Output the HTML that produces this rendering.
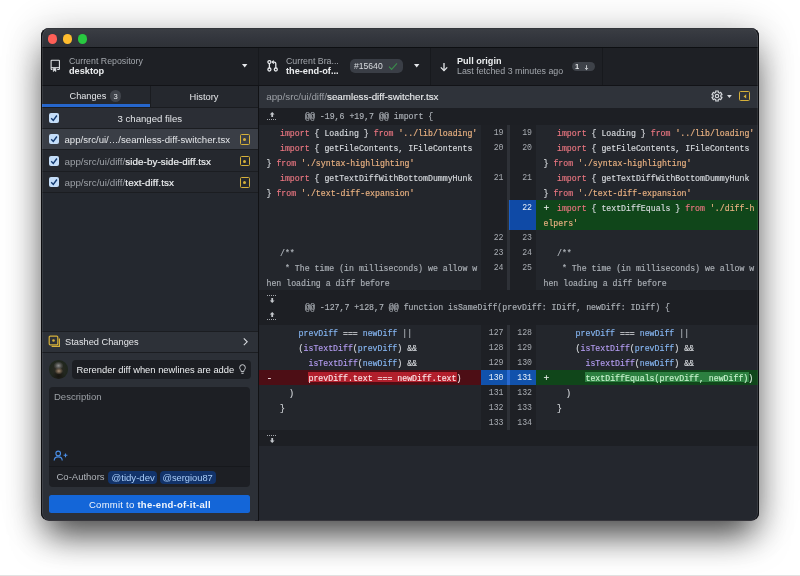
<!DOCTYPE html>
<html><head><meta charset="utf-8">
<style>
*{box-sizing:border-box;margin:0;padding:0}
html,body{width:800px;height:576px;overflow:hidden;background:#fff;font-family:"Liberation Sans",sans-serif}
.a{position:absolute}
#strip{left:0;top:574.8px;width:800px;height:1.2px;background:#e2e2e2}
#shadow{left:41px;top:28px;width:718px;height:492.5px;border-radius:8px;box-shadow:0 20px 34px -6px rgba(0,0,0,.66),0 4px 40px rgba(0,0,0,.24)}
#ring{left:41px;top:28px;width:718px;height:492.5px;border-radius:8px;border:1px solid #0c0d10;border-top-color:rgba(12,13,16,.25);border-bottom-color:rgba(30,28,34,.6);box-shadow:inset 1px 0 0 0 rgba(255,255,255,.09),inset -1px 0 0 0 rgba(255,255,255,.09);pointer-events:none}
#win{left:0;top:0;width:800px;height:576px;clip-path:inset(28px 41px 55.5px 41px round 8px);background:#24272d}
.m{font-family:"Liberation Mono",monospace;font-size:8.22px;white-space:pre;line-height:15px;color:#d8dbdf;-webkit-text-stroke:0.15px}
.t{white-space:nowrap;line-height:1}
.dot{width:9.5px;height:9.5px;border-radius:50%;top:34px}
.k{color:#ea7680}.s{color:#eab282}.v{color:#86b6f2}.f{color:#b39cf0}.c{color:#adb2b8}
.ln{font-family:"Liberation Mono",monospace;font-size:8.22px;line-height:15px;color:#a9adb3;text-align:right}
</style></head><body>
<div id="strip" class="a"></div>
<div id="shadow" class="a"></div>
<div id="win" class="a"><div class="a" style="left:0;top:0;width:800px;height:576px;will-change:transform">
  <!-- title bar -->
  <div class="a" style="left:41px;top:28px;width:718px;height:19.5px;background:linear-gradient(#44474c 0,#3a3d43 1.5px,#34373e 45%,#2e3137 100%);border-bottom:1px solid #0d0f12"></div>
  <div class="a dot" style="left:47.5px;background:#fe5f57"></div>
  <div class="a dot" style="left:62.5px;background:#febc2e"></div>
  <div class="a dot" style="left:77.5px;background:#28c840"></div>

  <!-- toolbar -->
  <div class="a" style="left:41px;top:47.5px;width:718px;height:38px;background:#1e2025;border-bottom:1px solid #121317"></div>
  <div class="a" style="left:258px;top:47.5px;width:1px;height:37px;background:#17191d"></div>
  <div class="a" style="left:430px;top:47.5px;width:1px;height:37px;background:#17191d"></div>
  <div class="a" style="left:602px;top:47.5px;width:1px;height:37px;background:#17191d"></div>
  <!-- repo icon -->
  <svg class="a" style="left:48px;top:57px" width="16" height="17" viewBox="0 0 16 17" fill="none" stroke="#e6e8eb" stroke-width="1.05">
    <path d="M3.1 12.5 V3.8 Q3.1 3.2 3.7 3.2 H10.8 Q11.4 3.2 11.4 3.8 V11.9 Q11.4 12.5 10.8 12.5 H9.2"/>
    <path d="M3.1 10.7 H11.4"/>
    <path d="M3.1 12.5 H4.4"/>
    <path d="M5.3 11.6 V14.6 L6.6 13.6 L7.9 14.6 V11.6 Z" fill="#e6e8eb" stroke-width="0.6"/>
  </svg>
  <div class="a t" style="left:69px;top:57px;font-size:8.8px;color:#a3a7ad">Current Repository</div>
  <div class="a t" style="left:69px;top:67px;font-size:9.2px;font-weight:bold;color:#eceef0">desktop</div>
  <svg class="a" style="left:242px;top:64px" width="6" height="4"><path d="M0 0H5.4L2.7 3.4Z" fill="#e6e8eb"/></svg>

  <!-- branch icon -->
  <svg class="a" style="left:264px;top:57px" width="16" height="17" viewBox="0 0 16 17" fill="none" stroke="#e6e8eb" stroke-width="1.3">
    <circle cx="5.4" cy="5.1" r="1.5"/>
    <circle cx="5.4" cy="12.5" r="1.5"/>
    <path d="M5.4 6.6 V11"/>
    <circle cx="11.8" cy="12.5" r="1.5"/>
    <path d="M11.8 11 V6.6 Q11.8 5.1 10.3 5.1 H8.6"/>
    <path d="M9.8 3.6 L8.3 5.1 L9.8 6.6"/>
  </svg>
  <div class="a t" style="left:286px;top:57px;font-size:8.8px;color:#a3a7ad">Current Bra...</div>
  <div class="a t" style="left:286px;top:67px;font-size:9.2px;font-weight:bold;color:#eceef0">the-end-of...</div>
  <div class="a" style="left:350px;top:59px;width:52.5px;height:13.5px;border-radius:5px;background:#3a3e46"></div>
  <div class="a t" style="left:354px;top:62px;font-size:8.6px;color:#d7dade">#15640</div>
  <svg class="a" style="left:388px;top:62px" width="10" height="9"><path d="M1 4.6 L3.6 7.4 L9 1.4" fill="none" stroke="#3a8c4b" stroke-width="1.1"/></svg>
  <svg class="a" style="left:414px;top:64px" width="6" height="4"><path d="M0 0H5.4L2.7 3.4Z" fill="#e6e8eb"/></svg>

  <!-- pull icon -->
  <svg class="a" style="left:438px;top:62px" width="12" height="10" viewBox="0 0 12 10" fill="none" stroke="#e6e8eb" stroke-width="1.3">
    <path d="M6 1 V8.6"/><path d="M2.8 5.4 L6 8.6 L9.2 5.4"/>
  </svg>
  <div class="a t" style="left:457px;top:57px;font-size:9.1px;font-weight:bold;color:#eceef0">Pull origin</div>
  <div class="a t" style="left:457px;top:67px;font-size:8.85px;color:#a3a7ad">Last fetched 3 minutes ago</div>
  <div class="a" style="left:571.5px;top:62px;width:23px;height:9px;border-radius:4.5px;background:#3e4249"></div>
  <div class="a t" style="left:575px;top:63px;font-size:7.5px;font-weight:bold;color:#e4e6e9">1</div>
  <svg class="a" style="left:582.5px;top:63.5px" width="7" height="7" viewBox="0 0 7 7" fill="none" stroke="#cfd2d6" stroke-width="0.9"><path d="M3.5 1.2V5.6"/><path d="M1.9 4L3.5 5.6L5.1 4"/></svg>

  <!-- LEFT PANE -->
  <div class="a" style="left:41px;top:85.5px;width:217px;height:435px;background:#24282f"></div>
  <!-- tabs -->
  <div class="a" style="left:41px;top:85.5px;width:217px;height:22px;background:#25282e;border-bottom:1px solid #1a1c20"></div>
  <div class="a" style="left:150px;top:85.5px;width:1px;height:21.5px;background:#1a1c20"></div>
  <div class="a" style="left:41px;top:104.2px;width:109px;height:3.3px;background:#2666cc"></div>
  <div class="a t" style="left:69.5px;top:92px;font-size:9.2px;color:#e4e6e9">Changes</div>
  <div class="a" style="left:110px;top:90.2px;width:11.4px;height:11.4px;border-radius:50%;background:#40444b"></div>
  <div class="a t" style="left:113.6px;top:92.6px;font-size:7.6px;color:#e4e6e9">3</div>
  <div class="a t" style="left:189.6px;top:92.6px;font-size:9.3px;color:#e4e6e9">History</div>

  <!-- changed files header -->
  <div class="a" style="left:41px;top:107.5px;width:217px;height:21.5px;background:#2b2e35;border-bottom:1px solid #1b1d21"></div>
  <div class="a" style="left:49px;top:112.5px;width:10.2px;height:10.2px;border-radius:2px;background:#c4ddf8"></div>
  <svg class="a" style="left:49px;top:112.5px" width="11" height="11"><path d="M2.2 5.2 L4.3 7.4 L7.9 2.5" fill="none" stroke="#133a70" stroke-width="1.4"/></svg>
  <div class="a t" style="left:117.5px;top:113.5px;font-size:9.6px;color:#e4e6e9">3 changed files</div>

  <!-- rows -->
  <div class="a" style="left:41px;top:129px;width:217px;height:21px;background:#3a3e46;border-bottom:1px solid #1b1d21"></div>
  <div class="a" style="left:41px;top:150px;width:217px;height:21.5px;background:#25282e;border-bottom:1px solid #1b1d21"></div>
  <div class="a" style="left:41px;top:171.5px;width:217px;height:21.5px;background:#25282e;border-bottom:1px solid #1b1d21"></div>

  <div class="a" style="left:49px;top:134px;width:10.2px;height:10.2px;border-radius:2px;background:#c4ddf8"></div>
  <svg class="a" style="left:49px;top:134px" width="11" height="11"><path d="M2.2 5.2 L4.3 7.4 L7.9 2.5" fill="none" stroke="#133a70" stroke-width="1.4"/></svg>
  <div class="a" style="left:49px;top:155.5px;width:10.2px;height:10.2px;border-radius:2px;background:#c4ddf8"></div>
  <svg class="a" style="left:49px;top:155.5px" width="11" height="11"><path d="M2.2 5.2 L4.3 7.4 L7.9 2.5" fill="none" stroke="#133a70" stroke-width="1.4"/></svg>
  <div class="a" style="left:49px;top:177px;width:10.2px;height:10.2px;border-radius:2px;background:#c4ddf8"></div>
  <svg class="a" style="left:49px;top:177px" width="11" height="11"><path d="M2.2 5.2 L4.3 7.4 L7.9 2.5" fill="none" stroke="#133a70" stroke-width="1.4"/></svg>

  <div class="a t" style="left:64.5px;top:135px;font-size:9.6px;color:#e4e6e9">app/src/ui/…/seamless-diff-switcher.tsx</div>
  <div class="a t" style="left:64.5px;top:156.5px;font-size:9.8px;color:#9ca0a6">app/src/ui/diff/<span style="color:#eceef0;-webkit-text-stroke:0.2px #eceef0;letter-spacing:0.07px">side-by-side-diff.tsx</span></div>
  <div class="a t" style="left:64.5px;top:178px;font-size:9.8px;color:#9ca0a6">app/src/ui/diff/<span style="color:#eceef0;-webkit-text-stroke:0.2px #eceef0;letter-spacing:0.12px">text-diff.tsx</span></div>

  <div class="a" style="left:239.5px;top:134.3px;width:10.5px;height:10.5px;border:1.2px solid #d5b03a;border-radius:1.5px"></div>
  <div class="a" style="left:243.25px;top:138.2px;width:3px;height:3px;background:#d5b03a;border-radius:50%"></div>
  <div class="a" style="left:239.5px;top:155.8px;width:10.5px;height:10.5px;border:1.2px solid #d5b03a;border-radius:1.5px"></div>
  <div class="a" style="left:243.25px;top:159.7px;width:3px;height:3px;background:#d5b03a;border-radius:50%"></div>
  <div class="a" style="left:239.5px;top:177.3px;width:10.5px;height:10.5px;border:1.2px solid #d5b03a;border-radius:1.5px"></div>
  <div class="a" style="left:243.25px;top:181.2px;width:3px;height:3px;background:#d5b03a;border-radius:50%"></div>

  <!-- stashed -->
  <div class="a" style="left:41px;top:330.5px;width:217px;height:22px;background:#2d3138;border-top:1px solid #1b1d21;border-bottom:1px solid #1b1d21"></div>
  <svg class="a" style="left:48px;top:335px" width="14" height="14" viewBox="0 0 14 14" fill="none" stroke="#d5b03a" stroke-width="1.2">
    <rect x="1.2" y="1.2" width="8.6" height="8.6" rx="1"/>
    <path d="M3.6 11.4 H11.4 V3.6"/>
    <circle cx="5.5" cy="5.5" r="1.3" fill="#d5b03a" stroke="none"/>
  </svg>
  <div class="a t" style="left:65px;top:337.6px;font-size:9.25px;color:#e4e6e9">Stashed Changes</div>
  <svg class="a" style="left:241.5px;top:337px" width="7" height="10"><path d="M1.8 1.4 L5.2 4.8 L1.8 8.2" fill="none" stroke="#d6d9dd" stroke-width="1.1"/></svg>

  <!-- commit area -->
  <div class="a" style="left:41px;top:352.5px;width:217px;height:168px;background:#2c3037"></div>
  <div class="a" style="left:49px;top:360px;width:18.5px;height:18.5px;border-radius:50%;background:radial-gradient(ellipse 22% 18% at 52% 58%,#a08a72 0,rgba(120,100,80,.6) 60%,transparent 100%),radial-gradient(ellipse 26% 22% at 50% 30%,#8f8f8f 0,rgba(110,110,110,.5) 60%,transparent 100%),radial-gradient(ellipse 35% 30% at 50% 85%,#17140f 0,transparent 100%),radial-gradient(circle at 50% 50%,#2e2a24 0,#1e261d 70%,#263124 100%)"></div>
  <div class="a" style="left:71.5px;top:360px;width:179px;height:18.5px;border-radius:4px;background:#1c1e23"></div>
  <div class="a t" style="left:76.5px;top:364.5px;font-size:9.4px;color:#eceef0">Rerender diff when newlines are adde</div>
  <svg class="a" style="left:239px;top:363.5px" width="7" height="11" viewBox="0 0 7 11" fill="none" stroke="#d6d9dd" stroke-width="0.95"><path d="M2.2 7.6 Q2.2 6.4 1.4 5.5 Q0.7 4.6 0.7 3.5 A2.8 2.8 0 0 1 6.3 3.5 Q6.3 4.6 5.6 5.5 Q4.8 6.4 4.8 7.6 Z"/><path d="M2.4 9.3 H4.6"/></svg>

  <div class="a" style="left:49px;top:386.5px;width:201px;height:100px;border-radius:4px;background:#1d1f24"></div>
  <div class="a" style="left:49px;top:466px;width:201px;height:1px;background:#16181c"></div>
  <div class="a t" style="left:54px;top:392px;font-size:9.5px;color:#9ca0a6">Description</div>
  <svg class="a" style="left:53px;top:450px" width="16" height="12" viewBox="0 0 16 12" fill="none" stroke="#4a8ee6" stroke-width="1.1">
    <circle cx="5.2" cy="3.4" r="2.3"/><path d="M1.2 10.6 Q1.2 6.9 5.2 6.9 Q9.2 6.9 9.2 10.6"/><path d="M10.6 5.3 H14.4 M12.5 3.4 V7.2"/>
  </svg>
  <div class="a t" style="left:56.5px;top:471.6px;font-size:9.5px;color:#b0b4ba">Co-Authors</div>
  <div class="a" style="left:108.3px;top:470.5px;width:49px;height:13.2px;border-radius:4px;background:#12336a"></div>
  <div class="a t" style="left:111.5px;top:472.5px;font-size:9.6px;color:#a9cdf8">@tidy-dev</div>
  <div class="a" style="left:159.5px;top:470.5px;width:56.5px;height:13.2px;border-radius:4px;background:#12336a"></div>
  <div class="a t" style="left:162.5px;top:473.5px;font-size:9.3px;color:#a9cdf8">@sergiou87</div>

  <div class="a" style="left:49px;top:495px;width:201px;height:18px;border-radius:2.5px;background:#1466d8"></div>
  <div class="a t" style="left:89px;top:499.6px;font-size:9.5px;letter-spacing:0.25px;color:#f2f6fc">Commit to <b>the-end-of-it-all</b></div>

  <!-- separator -->
  <div class="a" style="left:258px;top:85.5px;width:1px;height:435px;background:#111215"></div>

  <!-- RIGHT PANE -->
    <!-- path bar -->
  <div class="a" style="left:259px;top:85.5px;width:500px;height:22px;background:#2f333a"></div>
  <div class="a t" style="left:266.2px;top:92.3px;font-size:9.8px;color:#9ca0a6">app/src/ui/diff/<span style="color:#eceef0;-webkit-text-stroke:0.1px #eceef0">seamless-diff-switcher.tsx</span></div>
  <svg class="a" style="left:710.25px;top:89.4px" width="14" height="14" viewBox="0 0 14 14" fill="none" stroke="#d6d9dd" stroke-width="1.15" stroke-linejoin="round">
    <path d="M5.66 1.97 L8.34 1.97 L8.17 3.28 L9.64 4.13 L10.68 3.33 L12.02 5.65 L10.81 6.15 L10.81 7.85 L12.02 8.35 L10.68 10.67 L9.64 9.87 L8.17 10.72 L8.34 12.03 L5.66 12.03 L5.83 10.72 L4.36 9.87 L3.32 10.67 L1.98 8.35 L3.19 7.85 L3.19 6.15 L1.98 5.65 L3.32 3.33 L4.36 4.13 L5.83 3.28Z"/>
    <circle cx="7" cy="7" r="1.7"/>
  </svg>
  <svg class="a" style="left:726.8px;top:95px" width="6" height="4"><path d="M0 0H4.8L2.4 3Z" fill="#d6d9dd"/></svg>
  <div class="a" style="left:739.2px;top:90.6px;width:10.6px;height:10.6px;border:1.2px solid #d5b03a;border-radius:1.5px"></div>
  <svg class="a" style="left:743px;top:93.5px" width="4" height="5"><path d="M3.2 0.3 V4.5 L0.5 2.4Z" fill="#d5b03a"/></svg>

  <!-- diff base -->
  <div class="a" style="left:259px;top:107.5px;width:500px;height:413px;background:#24272e"></div>
  <!-- hunk header 1 -->
  <div class="a" style="left:259px;top:107.5px;width:500px;height:17.5px;background:#1d1f24"></div>
  <!-- code bg rows 1 -->
  <div class="a" style="left:259px;top:125px;width:222px;height:165px;background:#23262c"></div>
  <div class="a" style="left:536px;top:125px;width:223px;height:165px;background:#23262c"></div>
  <div class="a" style="left:481px;top:125px;width:55px;height:165px;background:#1e2025"></div>
  <div class="a" style="left:507px;top:125px;width:3px;height:165px;background:#2e3137"></div>
  <!-- add block -->
  <div class="a" style="left:508.5px;top:200px;width:27.5px;height:30px;background:#0f4aa6"></div><div class="a" style="left:508.5px;top:200px;width:1.5px;height:30px;background:#1a60c8"></div>
  <div class="a" style="left:536px;top:200px;width:223px;height:30px;background:#10461a"></div>
  <!-- hunk header 2 -->
  <div class="a" style="left:259px;top:290px;width:500px;height:35px;background:#1d1f24"></div>
  <!-- code bg rows 2 -->
  <div class="a" style="left:259px;top:325px;width:222px;height:105px;background:#23262c"></div>
  <div class="a" style="left:536px;top:325px;width:223px;height:105px;background:#23262c"></div>
  <div class="a" style="left:481px;top:325px;width:55px;height:105px;background:#1e2025"></div>
  <div class="a" style="left:507px;top:325px;width:3px;height:105px;background:#2e3137"></div>
  <!-- red/green row -->
  <div class="a" style="left:259px;top:370px;width:222px;height:15px;background:#4d0e15"></div>
  <div class="a" style="left:481px;top:370px;width:55px;height:15px;background:#1152ac"></div>
  <div class="a" style="left:507px;top:370px;width:3px;height:15px;background:#2a6ad0"></div>
  <div class="a" style="left:536px;top:370px;width:223px;height:15px;background:#10461a"></div>
  <div class="a" style="left:308.3px;top:372.4px;width:148.7px;height:9.8px;background:#b21f2c"></div>
  <div class="a" style="left:584.8px;top:372.4px;width:164.2px;height:9.8px;background:#2c8040"></div>
  <!-- expander bar -->
  <div class="a" style="left:259px;top:430px;width:500px;height:16px;background:#1d1f24"></div>

  <!-- expander icons -->
  <svg class="a" style="left:266px;top:110px" width="13" height="12" viewBox="0 0 13 12"><path d="M6.2 1.9 L8.6 4.5 H7.1 V7 H5.3 V4.5 H3.8 Z" fill="#c4c7cc"/><path d="M1 9.5 H11" stroke="#a4a7ac" stroke-width="1" stroke-dasharray="1 1"/></svg>
  <svg class="a" style="left:266px;top:294px" width="13" height="12" viewBox="0 0 13 12"><path d="M1 1.5 H11" stroke="#a4a7ac" stroke-width="1" stroke-dasharray="1 1"/><path d="M6.2 9 L8.6 6.4 H7.1 V3.9 H5.3 V6.4 H3.8 Z" fill="#c4c7cc"/></svg>
  <svg class="a" style="left:266px;top:310px" width="13" height="12" viewBox="0 0 13 12"><path d="M6.2 1.9 L8.6 4.5 H7.1 V7 H5.3 V4.5 H3.8 Z" fill="#c4c7cc"/><path d="M1 9.5 H11" stroke="#a4a7ac" stroke-width="1" stroke-dasharray="1 1"/></svg>
  <svg class="a" style="left:266px;top:434px" width="13" height="12" viewBox="0 0 13 12"><path d="M1 1.5 H11" stroke="#a4a7ac" stroke-width="1" stroke-dasharray="1 1"/><path d="M6.2 9 L8.6 6.4 H7.1 V3.9 H5.3 V6.4 H3.8 Z" fill="#c4c7cc"/></svg>
  <!-- hunk header texts -->
  <div class="a m c" style="left:305px;top:108.5px">@@ -19,6 +19,7 @@ import {</div>
  <div class="a m c" style="left:305px;top:300px">@@ -127,7 +128,7 @@ function isSameDiff(prevDiff: IDiff, newDiff: IDiff) {</div>

  <!-- left code -->
  <div class="a m" style="left:259px;top:125.8px;width:222px;overflow:hidden"><div style="padding-left:21px"><span class="k">import</span> { Loading } <span class="k">from</span> <span class="s">'../lib/loading'</span></div><div style="padding-left:21px"><span class="k">import</span> { getFileContents, IFileContents</div><div style="padding-left:7.5px">} <span class="k">from</span> <span class="s">'./syntax-highlighting'</span></div><div style="padding-left:21px"><span class="k">import</span> { getTextDiffWithBottomDummyHunk</div><div style="padding-left:7.5px">} <span class="k">from</span> <span class="s">'./text-diff-expansion'</span></div><div> </div><div> </div><div> </div><div style="padding-left:21px" class="c">/**</div><div style="padding-left:21px" class="c"> * The time (in milliseconds) we allow w</div><div style="padding-left:7.5px" class="c">hen loading a diff before</div></div>
  <div class="a m" style="left:259px;top:325.8px;width:222px;overflow:hidden"><div style="padding-left:39.6px"><span class="v">prevDiff</span> === <span class="v">newDiff</span> <span class="c">||</span></div><div style="padding-left:39.6px">(<span class="f">isTextDiff</span>(<span class="v">prevDiff</span>) &amp;&amp;</div><div style="padding-left:49.5px"><span class="f">isTextDiff</span>(<span class="v">newDiff</span>) &amp;&amp;</div><div style="padding-left:7.5px;color:#f3e3e4;position:relative"><span style="font-size:9.6px;color:#f6e6e8">-</span><span style="position:absolute;left:49.5px;color:#fbe3e6">prevDiff.text === newDiff.text<span style="color:#f3e3e4">)</span></span></div><div style="padding-left:30px">)</div><div style="padding-left:21px">}</div></div>

  <!-- right code -->
  <div class="a m" style="left:536px;top:125.8px;width:223px;overflow:hidden"><div style="padding-left:21px"><span class="k">import</span> { Loading } <span class="k">from</span> <span class="s">'../lib/loading'</span></div><div style="padding-left:21px"><span class="k">import</span> { getFileContents, IFileContents</div><div style="padding-left:7.5px">} <span class="k">from</span> <span class="s">'./syntax-highlighting'</span></div><div style="padding-left:21px"><span class="k">import</span> { getTextDiffWithBottomDummyHunk</div><div style="padding-left:7.5px">} <span class="k">from</span> <span class="s">'./text-diff-expansion'</span></div><div style="padding-left:7.5px;position:relative;color:#e9efe9"><span style="font-size:9.6px;color:#eef4ee">+</span><span style="position:absolute;left:21px;color:#d8dbdf"><span class="k">import</span> { textDiffEquals } <span class="k">from</span> <span class="s">'./diff-h</span></span></div><div style="padding-left:7.5px"><span class="s">elpers'</span></div><div> </div><div style="padding-left:21px" class="c">/**</div><div style="padding-left:21px" class="c"> * The time (in milliseconds) we allow w</div><div style="padding-left:7.5px" class="c">hen loading a diff before</div></div>
  <div class="a m" style="left:536px;top:325.8px;width:223px;overflow:hidden"><div style="padding-left:39.6px"><span class="v">prevDiff</span> === <span class="v">newDiff</span> <span class="c">||</span></div><div style="padding-left:39.6px">(<span class="f">isTextDiff</span>(<span class="v">prevDiff</span>) &amp;&amp;</div><div style="padding-left:49.5px"><span class="f">isTextDiff</span>(<span class="v">newDiff</span>) &amp;&amp;</div><div style="padding-left:7.5px;color:#e3f3e6;position:relative"><span style="font-size:9.6px;color:#eef4ee">+</span><span style="position:absolute;left:49.5px;color:#c6f2cc">textDiffEquals(prevDiff, newDiff)<span style="color:#e3f3e6">)</span></span></div><div style="padding-left:30px">)</div><div style="padding-left:21px">}</div></div>

  <!-- line numbers -->
  <div class="a ln" style="left:481px;top:125px;width:22.5px">19<br>20<br>&nbsp;<br>21<br>&nbsp;<br>&nbsp;<br>&nbsp;<br>22<br>23<br>24</div>
  <div class="a ln" style="left:510px;top:125px;width:22px">19<br>20<br>&nbsp;<br>21<br>&nbsp;<br><span style="color:#e8f0fb">22</span><br>&nbsp;<br>23<br>24<br>25</div>
  <div class="a ln" style="left:481px;top:325px;width:22.5px">127<br>128<br>129<br><span style="color:#e8f0fb">130</span><br>131<br>132<br>133</div>
  <div class="a ln" style="left:510px;top:325px;width:22px">128<br>129<br>130<br><span style="color:#e8f0fb">131</span><br>132<br>133<br>134</div>

</div></div>
<div id="ring" class="a"></div>
</body></html>
